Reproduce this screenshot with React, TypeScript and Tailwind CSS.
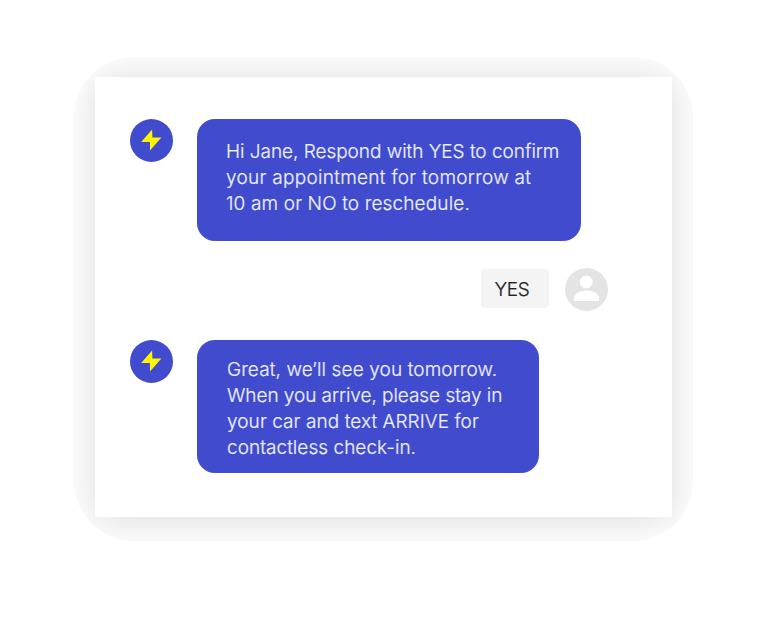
import React from "react";

function BoltAvatar() {
  return (
    <div className="h-[43px] w-[43px] shrink-0 rounded-full bg-[#404bcd]">
      <svg viewBox="0 0 43 43" className="h-full w-full" aria-hidden="true">
        <path d="M22.1 10.6 11.2 23h8.7l.1 8.6L31.4 18.5h-9z" fill="#fff500" />
      </svg>
    </div>
  );
}

function UserAvatar() {
  return (
    <div className="h-[43px] w-[43px] shrink-0 rounded-full bg-[#e4e4e4]">
      <svg viewBox="0 0 43 43" className="h-full w-full" fill="#fff" aria-hidden="true">
        <circle cx="21.2" cy="14" r="6.4" />
        <path d="M9 33v-3.2c0-4.8 7.4-7.4 12.5-7.4S34 25 34 29.8V33z" />
      </svg>
    </div>
  );
}

export default function App() {
  return (
    <div className="h-[622px] w-[768px] overflow-hidden bg-white pl-[74px] pt-[57px] font-['Inter',sans-serif] font-light">
      <div className="h-[484px] w-[619px] overflow-hidden rounded-[60px] bg-[#fefefe] pl-[20.5px] pt-[20px]">
        <main className="h-[440px] w-[577px] bg-white pl-[35px] pt-[42px] shadow-[0_2px_36px_rgba(0,0,0,0.145)]">
          <div className="flex gap-[24.5px]">
            <BoltAvatar />
            <div className="h-[122px] w-[384px] rounded-[18px] bg-[#404bcd] pl-[29px] pt-[20px] text-[19px] leading-[26px] text-[#eef0ff] [-webkit-text-stroke:0.2px_#eef0ff]">
              <p className="whitespace-nowrap tracking-[-0.03px]">Hi Jane, Respond with YES to confirm</p>
              <p className="whitespace-nowrap tracking-[0.29px]">your appointment for tomorrow at</p>
              <p className="whitespace-nowrap tracking-[0.14px]">10 am or NO to reschedule.</p>
            </div>
          </div>
          <div className="mt-[27px] flex gap-[16px] pl-[351px]">
            <div className="mt-[1px] h-[39px] w-[68px] rounded-[4px] bg-[#f4f4f4] pl-[14px] text-[19px] leading-[41px] tracking-[-0.4px] text-[#222] [-webkit-text-stroke:0.2px_#222]">
              YES
            </div>
            <UserAvatar />
          </div>
          <div className="mt-[29px] flex gap-[24.5px]">
            <BoltAvatar />
            <div className="h-[133px] w-[342px] rounded-[18px] bg-[#404bcd] pl-[30px] pt-[17px] text-[19px] leading-[26.1px] text-[#eef0ff] [-webkit-text-stroke:0.2px_#eef0ff]">
              <p className="whitespace-nowrap tracking-[0.11px]">Great, we’ll see you tomorrow.</p>
              <p className="whitespace-nowrap tracking-[-0.05px]">When you arrive, please stay in</p>
              <p className="whitespace-nowrap tracking-[0.08px]">your car and text ARRIVE for</p>
              <p className="whitespace-nowrap tracking-[0.04px]">contactless check-in.</p>
            </div>
          </div>
        </main>
      </div>
    </div>
  );
}
